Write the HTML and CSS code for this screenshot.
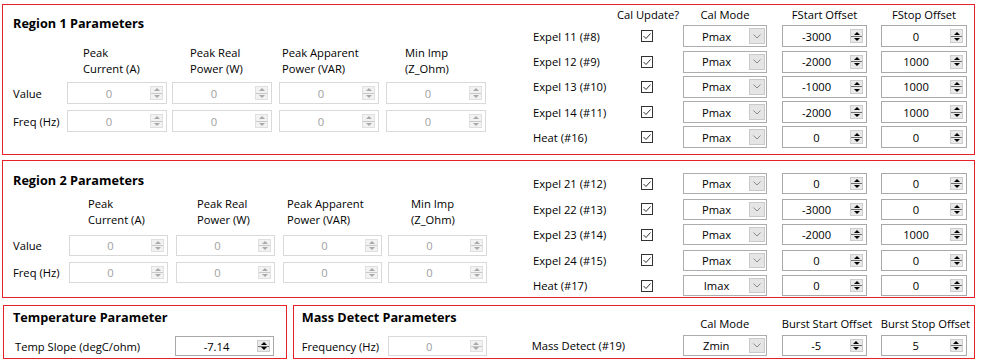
FILE: index.html
```html
<!DOCTYPE html>
<html>
<head>
<meta charset="utf-8">
<link rel="stylesheet" href="styles.css">
</head>
<body>
<div class="page">

  <section class="panel r1">
    <div class="left">
      <div class="title">Region 1 Parameters</div>
      <div class="lg lg1">
        <div></div>
        <div class="ch p16">Peak<br>Current (A)</div>
        <div class="ch p18">Peak Real<br>Power (W)</div>
        <div class="ch p3">Peak Apparent<br>Power (VAR)</div>
        <div class="ch p19">Min Imp<br>(Z_Ohm)</div>

        <div class="rl">Value</div>
        <div class="spin dis w100"><span class="v">0</span><span class="sb"><i class="u"></i><i class="d"></i></span></div>
        <div class="spin dis w100"><span class="v">0</span><span class="sb"><i class="u"></i><i class="d"></i></span></div>
        <div class="spin dis w100"><span class="v">0</span><span class="sb"><i class="u"></i><i class="d"></i></span></div>
        <div class="spin dis w100"><span class="v">0</span><span class="sb"><i class="u"></i><i class="d"></i></span></div>

        <div class="rl">Freq (Hz)</div>
        <div class="spin dis w100"><span class="v">0</span><span class="sb"><i class="u"></i><i class="d"></i></span></div>
        <div class="spin dis w100"><span class="v">0</span><span class="sb"><i class="u"></i><i class="d"></i></span></div>
        <div class="spin dis w100"><span class="v">0</span><span class="sb"><i class="u"></i><i class="d"></i></span></div>
        <div class="spin dis w100"><span class="v">0</span><span class="sb"><i class="u"></i><i class="d"></i></span></div>
      </div>
    </div>

    <div class="rg rg1">
      <div></div>
      <div class="hd w66">Cal Update?</div>
      <div class="hd w84">Cal Mode</div>
      <div class="hd w85">FStart Offset</div>
      <div class="hd w86">FStop Offset</div>

      <div class="lbl">Expel 11 (#8)</div>
      <div class="cc"><span class="cb"><svg width="10" height="10" viewBox="0 0 10 10"><path d="M1.5 5 L4 7.5 L8.5 2.5" fill="none" stroke="#333" stroke-width="1"/></svg></span></div>
      <div class="combo"><span class="ct">Pmax</span><span class="dd"><svg width="8" height="5" viewBox="0 0 8 5"><path d="M0.5 0.5 L4 4 L7.5 0.5" fill="none" stroke="#8a8a8a" stroke-width="1"/></svg></span></div>
      <div class="spin w85"><span class="v">-3000</span><span class="sb"><i class="u"></i><i class="d"></i></span></div>
      <div class="spin w86"><span class="v">0</span><span class="sb"><i class="u"></i><i class="d"></i></span></div>

      <div class="lbl">Expel 12 (#9)</div>
      <div class="cc"><span class="cb"><svg width="10" height="10" viewBox="0 0 10 10"><path d="M1.5 5 L4 7.5 L8.5 2.5" fill="none" stroke="#333" stroke-width="1"/></svg></span></div>
      <div class="combo"><span class="ct">Pmax</span><span class="dd"><svg width="8" height="5" viewBox="0 0 8 5"><path d="M0.5 0.5 L4 4 L7.5 0.5" fill="none" stroke="#8a8a8a" stroke-width="1"/></svg></span></div>
      <div class="spin w85"><span class="v">-2000</span><span class="sb"><i class="u"></i><i class="d"></i></span></div>
      <div class="spin w86"><span class="v">1000</span><span class="sb"><i class="u"></i><i class="d"></i></span></div>

      <div class="lbl">Expel 13 (#10)</div>
      <div class="cc"><span class="cb"><svg width="10" height="10" viewBox="0 0 10 10"><path d="M1.5 5 L4 7.5 L8.5 2.5" fill="none" stroke="#333" stroke-width="1"/></svg></span></div>
      <div class="combo"><span class="ct">Pmax</span><span class="dd"><svg width="8" height="5" viewBox="0 0 8 5"><path d="M0.5 0.5 L4 4 L7.5 0.5" fill="none" stroke="#8a8a8a" stroke-width="1"/></svg></span></div>
      <div class="spin w85"><span class="v">-1000</span><span class="sb"><i class="u"></i><i class="d"></i></span></div>
      <div class="spin w86"><span class="v">1000</span><span class="sb"><i class="u"></i><i class="d"></i></span></div>

      <div class="lbl">Expel 14 (#11)</div>
      <div class="cc"><span class="cb"><svg width="10" height="10" viewBox="0 0 10 10"><path d="M1.5 5 L4 7.5 L8.5 2.5" fill="none" stroke="#333" stroke-width="1"/></svg></span></div>
      <div class="combo"><span class="ct">Pmax</span><span class="dd"><svg width="8" height="5" viewBox="0 0 8 5"><path d="M0.5 0.5 L4 4 L7.5 0.5" fill="none" stroke="#8a8a8a" stroke-width="1"/></svg></span></div>
      <div class="spin w85"><span class="v">-2000</span><span class="sb"><i class="u"></i><i class="d"></i></span></div>
      <div class="spin w86"><span class="v">1000</span><span class="sb"><i class="u"></i><i class="d"></i></span></div>

      <div class="lbl">Heat (#16)</div>
      <div class="cc"><span class="cb"><svg width="10" height="10" viewBox="0 0 10 10"><path d="M1.5 5 L4 7.5 L8.5 2.5" fill="none" stroke="#333" stroke-width="1"/></svg></span></div>
      <div class="combo"><span class="ct">Pmax</span><span class="dd"><svg width="8" height="5" viewBox="0 0 8 5"><path d="M0.5 0.5 L4 4 L7.5 0.5" fill="none" stroke="#8a8a8a" stroke-width="1"/></svg></span></div>
      <div class="spin w85"><span class="v">0</span><span class="sb"><i class="u"></i><i class="d"></i></span></div>
      <div class="spin w86"><span class="v">0</span><span class="sb"><i class="u"></i><i class="d"></i></span></div>
    </div>
  </section>

  <section class="panel r2">
    <div class="left">
      <div class="title t2">Region 2 Parameters</div>
      <div class="lg lg2">
        <div></div>
        <div class="ch p19">Peak<br>Current (A)</div>
        <div class="ch p21">Peak Real<br>Power (W)</div>
        <div class="ch p4">Peak Apparent<br>Power (VAR)</div>
        <div class="ch p23">Min Imp<br>(Z_Ohm)</div>

        <div class="rl">Value</div>
        <div class="spin dis w99"><span class="v">0</span><span class="sb"><i class="u"></i><i class="d"></i></span></div>
        <div class="spin dis w99"><span class="v">0</span><span class="sb"><i class="u"></i><i class="d"></i></span></div>
        <div class="spin dis w99"><span class="v">0</span><span class="sb"><i class="u"></i><i class="d"></i></span></div>
        <div class="spin dis w99"><span class="v">0</span><span class="sb"><i class="u"></i><i class="d"></i></span></div>

        <div class="rl">Freq (Hz)</div>
        <div class="spin dis w99"><span class="v">0</span><span class="sb"><i class="u"></i><i class="d"></i></span></div>
        <div class="spin dis w99"><span class="v">0</span><span class="sb"><i class="u"></i><i class="d"></i></span></div>
        <div class="spin dis w99"><span class="v">0</span><span class="sb"><i class="u"></i><i class="d"></i></span></div>
        <div class="spin dis w99"><span class="v">0</span><span class="sb"><i class="u"></i><i class="d"></i></span></div>
      </div>
    </div>

    <div class="rg rg2">
      <div class="lbl">Expel 21 (#12)</div>
      <div class="cc"><span class="cb"><svg width="10" height="10" viewBox="0 0 10 10"><path d="M1.5 5 L4 7.5 L8.5 2.5" fill="none" stroke="#333" stroke-width="1"/></svg></span></div>
      <div class="combo"><span class="ct">Pmax</span><span class="dd"><svg width="8" height="5" viewBox="0 0 8 5"><path d="M0.5 0.5 L4 4 L7.5 0.5" fill="none" stroke="#8a8a8a" stroke-width="1"/></svg></span></div>
      <div class="spin w85"><span class="v">0</span><span class="sb"><i class="u"></i><i class="d"></i></span></div>
      <div class="spin w86"><span class="v">0</span><span class="sb"><i class="u"></i><i class="d"></i></span></div>

      <div class="lbl">Expel 22 (#13)</div>
      <div class="cc"><span class="cb"><svg width="10" height="10" viewBox="0 0 10 10"><path d="M1.5 5 L4 7.5 L8.5 2.5" fill="none" stroke="#333" stroke-width="1"/></svg></span></div>
      <div class="combo"><span class="ct">Pmax</span><span class="dd"><svg width="8" height="5" viewBox="0 0 8 5"><path d="M0.5 0.5 L4 4 L7.5 0.5" fill="none" stroke="#8a8a8a" stroke-width="1"/></svg></span></div>
      <div class="spin w85"><span class="v">-3000</span><span class="sb"><i class="u"></i><i class="d"></i></span></div>
      <div class="spin w86"><span class="v">0</span><span class="sb"><i class="u"></i><i class="d"></i></span></div>

      <div class="lbl">Expel 23 (#14)</div>
      <div class="cc"><span class="cb"><svg width="10" height="10" viewBox="0 0 10 10"><path d="M1.5 5 L4 7.5 L8.5 2.5" fill="none" stroke="#333" stroke-width="1"/></svg></span></div>
      <div class="combo"><span class="ct">Pmax</span><span class="dd"><svg width="8" height="5" viewBox="0 0 8 5"><path d="M0.5 0.5 L4 4 L7.5 0.5" fill="none" stroke="#8a8a8a" stroke-width="1"/></svg></span></div>
      <div class="spin w85"><span class="v">-2000</span><span class="sb"><i class="u"></i><i class="d"></i></span></div>
      <div class="spin w86"><span class="v">1000</span><span class="sb"><i class="u"></i><i class="d"></i></span></div>

      <div class="lbl">Expel 24 (#15)</div>
      <div class="cc"><span class="cb"><svg width="10" height="10" viewBox="0 0 10 10"><path d="M1.5 5 L4 7.5 L8.5 2.5" fill="none" stroke="#333" stroke-width="1"/></svg></span></div>
      <div class="combo"><span class="ct">Pmax</span><span class="dd"><svg width="8" height="5" viewBox="0 0 8 5"><path d="M0.5 0.5 L4 4 L7.5 0.5" fill="none" stroke="#8a8a8a" stroke-width="1"/></svg></span></div>
      <div class="spin w85"><span class="v">0</span><span class="sb"><i class="u"></i><i class="d"></i></span></div>
      <div class="spin w86"><span class="v">0</span><span class="sb"><i class="u"></i><i class="d"></i></span></div>

      <div class="lbl">Heat (#17)</div>
      <div class="cc"><span class="cb"><svg width="10" height="10" viewBox="0 0 10 10"><path d="M1.5 5 L4 7.5 L8.5 2.5" fill="none" stroke="#333" stroke-width="1"/></svg></span></div>
      <div class="combo"><span class="ct">Imax</span><span class="dd"><svg width="8" height="5" viewBox="0 0 8 5"><path d="M0.5 0.5 L4 4 L7.5 0.5" fill="none" stroke="#8a8a8a" stroke-width="1"/></svg></span></div>
      <div class="spin w85"><span class="v">0</span><span class="sb"><i class="u"></i><i class="d"></i></span></div>
      <div class="spin w86"><span class="v">0</span><span class="sb"><i class="u"></i><i class="d"></i></span></div>
    </div>
  </section>

  <div class="bottom">
    <section class="panel temp">
      <div class="title t3">Temperature Parameter</div>
      <div class="trow">
        <span class="tl">Temp Slope (degC/ohm)</span>
        <div class="spin w99 h20"><span class="v">-7.14</span><span class="sb"><i class="u"></i><i class="d"></i></span></div>
      </div>
    </section>

    <section class="panel mass">
      <div class="mleft">
        <div class="title t3">Mass Detect Parameters</div>
        <div class="mrow">
          <span class="ml">Frequency (Hz)</span>
          <div class="spin dis w99 h20"><span class="v">0</span><span class="sb"><i class="u"></i><i class="d"></i></span></div>
        </div>
      </div>
      <div class="mg">
        <div></div>
        <div class="hd w84">Cal Mode</div>
        <div class="hd w85">Burst Start Offset</div>
        <div class="hd w86">Burst Stop Offset</div>

        <div class="lbl">Mass Detect (#19)</div>
        <div class="combo"><span class="ct">Zmin</span><span class="dd"><svg width="8" height="5" viewBox="0 0 8 5"><path d="M0.5 0.5 L4 4 L7.5 0.5" fill="none" stroke="#8a8a8a" stroke-width="1"/></svg></span></div>
        <div class="spin w85"><span class="v">-5</span><span class="sb"><i class="u"></i><i class="d"></i></span></div>
        <div class="spin w86"><span class="v">5</span><span class="sb"><i class="u"></i><i class="d"></i></span></div>
      </div>
    </section>
  </div>

</div>
</body>
</html>
```

FILE: styles.css
```css
html, body {
  margin: 0;
  padding: 0;
  background: #ffffff;
}
body {
  font-family: "Open Sans", "Noto Sans", "Liberation Sans", sans-serif;
  font-size: 11.2px;
  color: #000;
}
.page {
  padding: 4px 0 0 2px;
  width: 973px;
}
.panel {
  box-sizing: border-box;
  border: 1px solid #e8202a;
}
.r1 {
  height: 151px;
  display: flex;
}
.r2 {
  height: 138px;
  margin-top: 5px;
  display: flex;
}
.left {
  width: 530px;
  padding-left: 10px;
  box-sizing: border-box;
  display: flex;
  flex-direction: column;
}
.title {
  font-weight: bold;
  font-size: 12.7px;
  line-height: 16px;
  margin-top: 10px;
  white-space: nowrap;
}
.t2 { margin-top: 11px; }
.t3 { margin-top: 3px; }

/* left parameter grid */
.lg {
  display: grid;
  row-gap: 6px;
}
.lg1 {
  margin-top: 14px;
  grid-template-columns: 54px 105px 107px 107px 100px;
  grid-template-rows: 31px 22px 22px;
}
.lg2 {
  margin-top: 8px;
  grid-template-columns: 56px 107px 107px 105px 99px;
  grid-template-rows: 33px 21px 21px;
}
.ch {
  line-height: 15.5px;
  align-self: start;
  white-space: nowrap;
}
.p3 { padding-left: 3px; }
.p4 { padding-left: 4px; }
.p16 { padding-left: 16px; }
.p18 { padding-left: 18px; }
.p19 { padding-left: 19px; }
.p21 { padding-left: 21px; }
.p23 { padding-left: 23px; }
.rl {
  display: flex;
  align-items: center;
}

/* right grid */
.rg {
  display: grid;
  grid-template-columns: 82px 68px 99px 99px 86px;
  align-content: start;
}
.rg1 {
  padding-top: 3px;
  grid-template-rows: 14px repeat(5, 22px);
  row-gap: 3.25px;
}
.rg2 {
  padding-top: 12px;
  grid-template-rows: repeat(5, 21px);
  row-gap: 4.5px;
}
.hd {
  text-align: center;
  line-height: 14px;
  white-space: nowrap;
}
.w66 { width: 66px; }
.w84 { width: 84px; }
.w85 { width: 85px; }
.w86 { width: 86px; }
.w99 { width: 99px; }
.w100 { width: 100px; }
.lbl {
  display: flex;
  align-items: center;
  white-space: nowrap;
}
.cc {
  display: flex;
  align-items: center;
  padding-left: 26px;
}
.cb {
  box-sizing: border-box;
  width: 12px;
  height: 12px;
  border: 1px solid #333;
  background: #fff;
  display: flex;
}

/* combo */
.combo {
  box-sizing: border-box;
  width: 84px;
  height: 100%;
  border: 1px solid #adadad;
  background: #fff;
  display: flex;
  align-items: center;
}
.ct {
  flex: 1;
  text-align: center;
}
.dd {
  box-sizing: border-box;
  width: 16px;
  height: calc(100% - 4px);
  margin-right: 1px;
  background: #e5e5e5;
  border: 1px solid #c9c9c9;
  display: flex;
  align-items: center;
  justify-content: center;
}

/* spinner */
.spin {
  box-sizing: border-box;
  height: 100%;
  border: 1px solid #a9a9a9;
  background: #fff;
  display: flex;
  align-items: center;
}
.h20 { height: 20px; }
.spin .v {
  flex: 1;
  text-align: center;
}
.sb {
  box-sizing: border-box;
  width: 13px;
  height: calc(100% - 6px);
  margin-right: 3px;
  border: 1px solid #cdcdcd;
  background: #e9e9e9;
  display: flex;
  flex-direction: column;
}
.sb i {
  flex: 1;
  display: flex;
  align-items: center;
  justify-content: center;
}
.sb .u {
  border-bottom: 1px solid #6e6e6e;
}
.sb i::before {
  content: "";
  width: 0;
  height: 0;
  border-left: 3px solid transparent;
  border-right: 3px solid transparent;
}
.sb .u::before { border-bottom: 3px solid #000; }
.sb .d::before { border-top: 3px solid #000; }

.spin.dis {
  border-color: #d9d9d9;
  color: #a0a0a0;
}
.spin.dis .sb {
  background: #f2f2f2;
  border-color: #e0e0e0;
}
.spin.dis .sb .u { border-bottom-color: #c8c8c8; }
.spin.dis .sb .u::before { border-bottom-color: #a9a9a9; }
.spin.dis .sb .d::before { border-top-color: #a9a9a9; }

/* bottom row */
.bottom {
  display: flex;
  margin-top: 7px;
  column-gap: 6px;
}
.temp {
  margin-left: 1px;
  width: 284px;
  height: 54px;
  padding-left: 9px;
}
.trow {
  display: flex;
  align-items: center;
  margin-top: 11px;
  padding-left: 2px;
}
.tl { width: 160px; white-space: nowrap; }
.mass {
  width: 683px;
  height: 54px;
  display: flex;
}
.mleft {
  width: 238px;
  padding-left: 8px;
  box-sizing: border-box;
}
.mrow {
  display: flex;
  align-items: center;
  margin-top: 11px;
}
.ml { width: 86px; white-space: nowrap; }
.mg {
  display: grid;
  grid-template-columns: 151px 99px 99px 86px;
  grid-template-rows: 16px 21px;
  row-gap: 3px;
  padding-top: 10px;
  align-content: start;
}
.mg .hd { line-height: 16px; }
```
